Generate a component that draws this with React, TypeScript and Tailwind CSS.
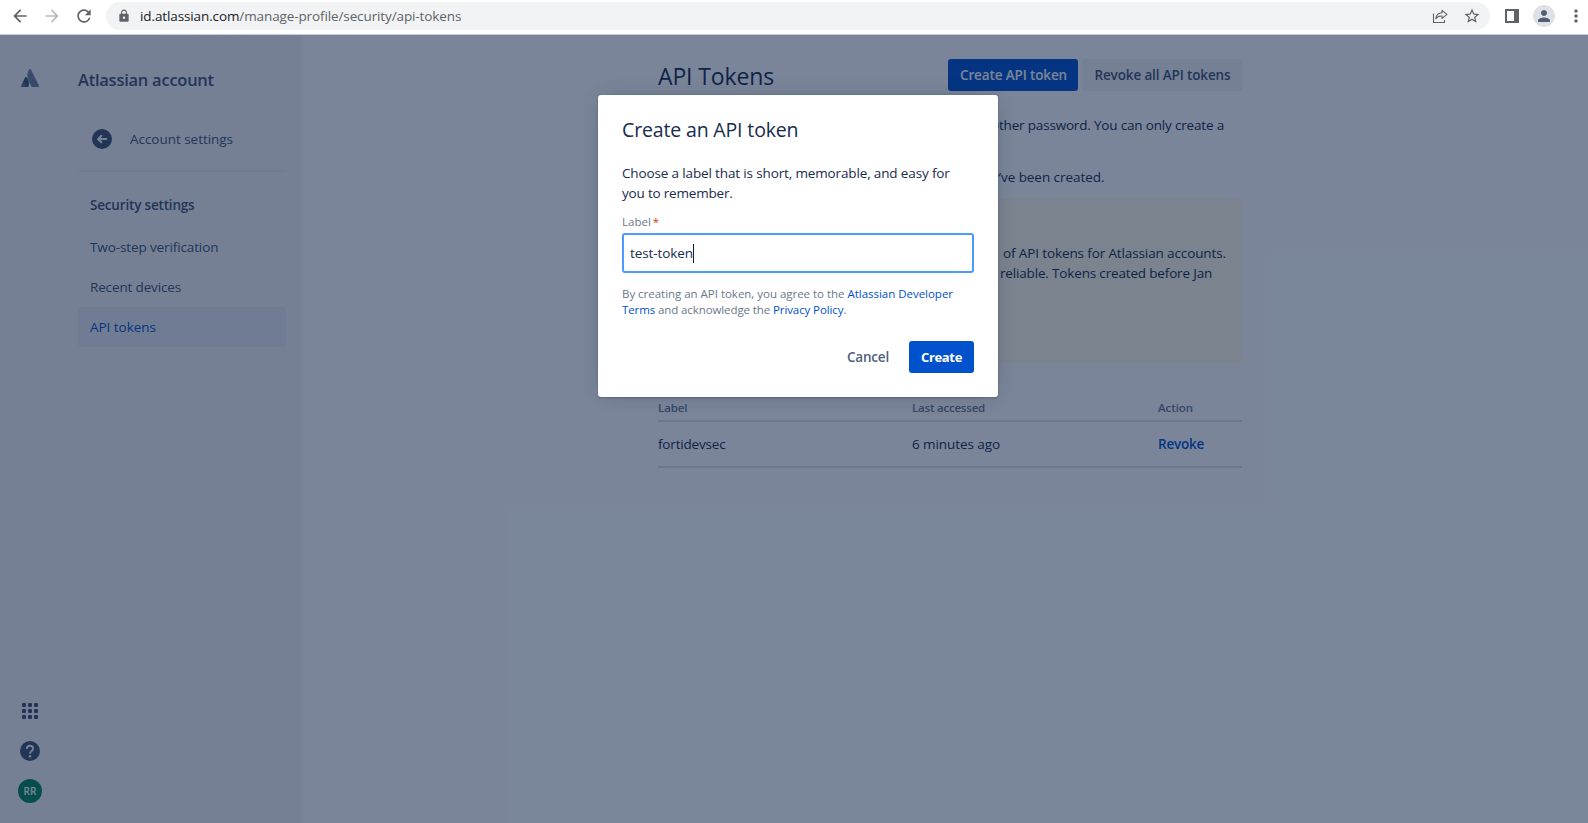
import { MdArrowBack, MdArrowForward, MdLock, MdMoreVert, MdPerson, MdRefresh, MdStarBorder } from "react-icons/md";

function ShareIcon() {
  return (
    <svg width="18" height="18" viewBox="0 0 18 18" fill="none" stroke="#5f6368" strokeWidth="1.1" strokeLinejoin="round">
      <path d="M2.5 6.5V15.5H13.5V13" />
      <path d="M11 3.4L16 7.4L11 11.4V9C8 8.8 6.2 9.6 4.8 11.8C5.2 8.2 7 6 11 5.8Z" />
    </svg>
  );
}

function BrowserBar() {
  return (
    <header className="h-[35px] shrink-0 border-b border-[#c9ccd1] bg-white">
      <div className="flex h-8 items-center text-[#5f6368]">
        <nav className="flex gap-2 pl-2">
          <span className="flex size-6 items-center justify-center"><MdArrowBack size={20} /></span>
          <span className="flex size-6 items-center justify-center text-[#babcbe]"><MdArrowForward size={20} /></span>
          <span className="flex size-6 items-center justify-center"><MdRefresh size={20} /></span>
        </nav>
        <div className="ml-[10px] flex h-7 w-[1384px] items-center rounded-full bg-[#f1f3f4] pr-[9px] pl-[11px]">
          <MdLock size={14} />
          <span className="ml-[9px] flex-1 text-[13.5px] leading-5 tracking-[-0.112px]">
            <span className="text-[#202124]">id.atlassian.com</span>/manage-profile/security/api-tokens
          </span>
          <ShareIcon />
          <MdStarBorder size={18} className="ml-[14px]" />
        </div>
        <span className="ml-[15px] h-[14px] w-[14px] border-2 border-r-[5px] border-[#5f6368]" />
        <span className="ml-[14px] flex size-[22px] items-center justify-center rounded-full bg-[#dee1e6] text-[#545d72]">
          <MdPerson size={18} />
        </span>
        <MdMoreVert size={20} className="ml-[11px]" />
      </div>
    </header>
  );
}

function AtlassianLogo() {
  return (
    <svg width="18" height="18" viewBox="0 0 24 24">
      <defs>
        <linearGradient id="leg" x1="0.9" y1="0.1" x2="0.2" y2="1">
          <stop offset="0" stopColor="#344563" />
          <stop offset="0.5" stopColor="#42526e" />
          <stop offset="1" stopColor="#6b7896" />
        </linearGradient>
      </defs>
      <path fill="url(#leg)" stroke="url(#leg)" strokeWidth="0.7" d="M7.12 11.084a.683.683 0 00-1.16.126L.075 22.974a.703.703 0 00.63 1.018h8.19a.678.678 0 00.63-.39c1.767-3.65.696-9.203-2.406-12.52z" />
      <path fill="#707d9b" stroke="#707d9b" strokeWidth="0.7" d="M11.434.386a15.515 15.515 0 00-.906 15.317l3.95 7.9a.703.703 0 00.628.388h8.19a.703.703 0 00.63-1.017L12.63.38a.664.664 0 00-1.196.006z" />
    </svg>
  );
}

function GlobalNav() {
  return (
    <div className="flex w-[60px] flex-col items-center pt-[34px] pb-5">
      <AtlassianLogo />
      <div className="mt-auto flex flex-col items-center">
        <div className="grid grid-cols-3 gap-[2px]">
          {Array.from({ length: 9 }, (_, i) => (
            <span key={i} className="size-1 rounded-[1px] bg-[#42526e]" />
          ))}
        </div>
        <svg width="20" height="20" viewBox="0 0 20 20" className="mt-[22px]">
          <circle cx="10" cy="10" r="10" fill="#42526e" />
          <path d="M6.9 8.1V7.8A3.1 3.1 0 0 1 13.1 7.8C13.1 9.9 10 10 10 12.7" fill="none" stroke="#f4f5f7" strokeWidth="1.9" />
          <circle cx="10" cy="15.3" r="1.2" fill="#f4f5f7" />
        </svg>
        <span className="mt-[18px] flex size-6 items-center justify-center rounded-full bg-[#00875a] text-[10px] font-semibold text-white">
          RR
        </span>
      </div>
    </div>
  );
}

function Sidebar() {
  return (
    <aside className="flex w-[302px] shrink-0 bg-[#f4f5f7] text-[13.5px] leading-5 text-[#42526e]">
      <GlobalNav />
      <div className="ml-[18px] w-[208px] pt-[33px]">
        <h2 className="text-[16.5px] leading-6 font-semibold tracking-[-0.25px]">Atlassian account</h2>
        <div className="mt-[27px] flex h-10 items-center pl-[14px]">
          <svg width="20" height="20" viewBox="0 0 20 20">
            <circle cx="10" cy="10" r="10" fill="#42526e" />
            <path d="M14.3 10H6.5M9.3 6.8L6.1 10L9.3 13.2" fill="none" stroke="#f4f5f7" strokeWidth="2" strokeLinecap="round" strokeLinejoin="round" />
          </svg>
          <span className="ml-[18px] tracking-[-0.035px]">Account settings</span>
        </div>
        <div className="mt-[11px] h-[2px] bg-[#ebecf0]" />
        <h3 className="mt-[23px] mb-3 pl-3 font-semibold tracking-[-0.18px]">Security settings</h3>
        <a className="flex h-10 items-center pl-3 tracking-[-0.115px]">Two-step verification</a>
        <a className="flex h-10 items-center pl-3 tracking-[-0.145px]">Recent devices</a>
        <a className="flex h-10 items-center rounded-[3px] bg-[#e8ecf3] pl-3 tracking-[-0.025px] text-[#0052cc]">API tokens</a>
      </div>
    </aside>
  );
}

function MainContent() {
  return (
    <main className="ml-[356px] w-[584px] pt-6 text-[13.5px] leading-5 text-[#172b4d]">
      <div className="flex h-8 items-center">
        <h1 className="mr-auto pt-[2px] text-[23px] leading-7 font-medium tracking-[-0.135px]">API Tokens</h1>
        <button className="h-8 w-[130px] rounded-[3px] bg-[#0052cc] pl-px font-semibold tracking-[-0.133px] text-white">Create API token</button>
        <button className="ml-1 h-8 w-[160px] rounded-[3px] bg-[#f4f5f7] pl-px font-semibold tracking-[-0.134px] text-[#42526e]">Revoke all API tokens</button>
      </div>
      <p className="mt-6 pl-[333px] whitespace-nowrap tracking-[-0.18px]">other password. You can only create a</p>
      <p className="mt-8 pl-[334px] whitespace-nowrap tracking-[-0.05px]">y’ve been created.</p>
      <section className="mt-3 h-[164px] rounded-[3px] bg-[#fffae6] pt-11 pl-[342px] whitespace-nowrap">
        <p className="pl-[3px] tracking-[-0.12px]">of API tokens for Atlassian accounts.</p>
        <p className="tracking-[-0.165px]">reliable. Tokens created before Jan</p>
      </section>
      <div className="mt-[37px] grid h-[22px] grid-cols-[254px_246px_84px] border-b-2 border-[#dfe1e6] text-[11.5px] leading-4 font-semibold text-[#6b778c]">
        <span className="tracking-[-0.1px]">Label</span>
        <span className="tracking-[-0.212px]">Last accessed</span>
        <span className="tracking-[-0.065px]">Action</span>
      </div>
      <div className="grid h-[46px] grid-cols-[254px_246px_84px] border-b-2 border-[#dfe1e6] pt-3">
        <span className="tracking-[-0.18px]">fortidevsec</span>
        <span className="tracking-[-0.075px]">6 minutes ago</span>
        <a className="font-semibold tracking-[-0.227px] text-[#0052cc]">Revoke</a>
      </div>
    </main>
  );
}

function CreateTokenDialog() {
  return (
    <div className="absolute inset-0 flex items-start bg-[#091e42]/54 pt-[60px] pl-[598px]">
      <div
        role="dialog"
        className="flex h-[302px] w-[400px] flex-col rounded-[3px] bg-white px-6 pt-[23px] pb-6 text-[13.5px] leading-5 text-[#172b4d] shadow-[0_0_0_1px_rgba(9,30,66,0.08),0_2px_1px_rgba(9,30,66,0.08),0_0_20px_-6px_rgba(9,30,66,0.31)]"
      >
        <h2 className="text-[19.5px] leading-6 font-medium tracking-[-0.15px]">Create an API token</h2>
        <p className="mt-[21px] whitespace-nowrap">
          <span className="tracking-[-0.14px]">Choose a label that is short, memorable, and easy for</span>
          <br />
          <span className="tracking-[-0.19px]">you to remember.</span>
        </p>
        <label className="mt-[11px] h-[19px] text-[11.5px] leading-4 font-medium text-[#6b778c]">
          Label<span className="pl-[2px] text-[#de350b]">*</span>
        </label>
        <div className="flex h-10 items-center rounded-[3px] border-2 border-[#4c9aff] pl-[6px]">
          <span className="tracking-[-0.087px]">test-token</span>
          <span className="h-[19px] w-px bg-[#091e42]" />
        </div>
        <p className="mt-[13px] text-[11.5px] leading-4 whitespace-nowrap text-[#6b778c]">
          <span className="tracking-[-0.023px]">
            By creating an API token, you agree to the <a className="text-[#0052cc]">Atlassian Developer</a>
          </span>
          <br />
          <span className="tracking-[-0.1px]">
            <a className="text-[#0052cc]">Terms</a> and acknowledge the <a className="text-[#0052cc]">Privacy Policy</a>.
          </span>
        </p>
        <div className="mt-auto flex justify-end">
          <button className="h-8 w-[66px] font-semibold tracking-[-0.202px] text-[#505f79]">Cancel</button>
          <button className="ml-[8px] h-8 w-[65px] rounded-[3px] bg-[#0052cc] text-[13px] font-bold tracking-[-0.341px] text-white">Create</button>
        </div>
      </div>
    </div>
  );
}

export default function App() {
  return (
    <div className="flex h-screen w-full flex-col overflow-hidden bg-white font-['Open_Sans',sans-serif]">
      <BrowserBar />
      <div className="relative flex flex-1 overflow-hidden">
        <Sidebar />
        <MainContent />
        <CreateTokenDialog />
      </div>
    </div>
  );
}
